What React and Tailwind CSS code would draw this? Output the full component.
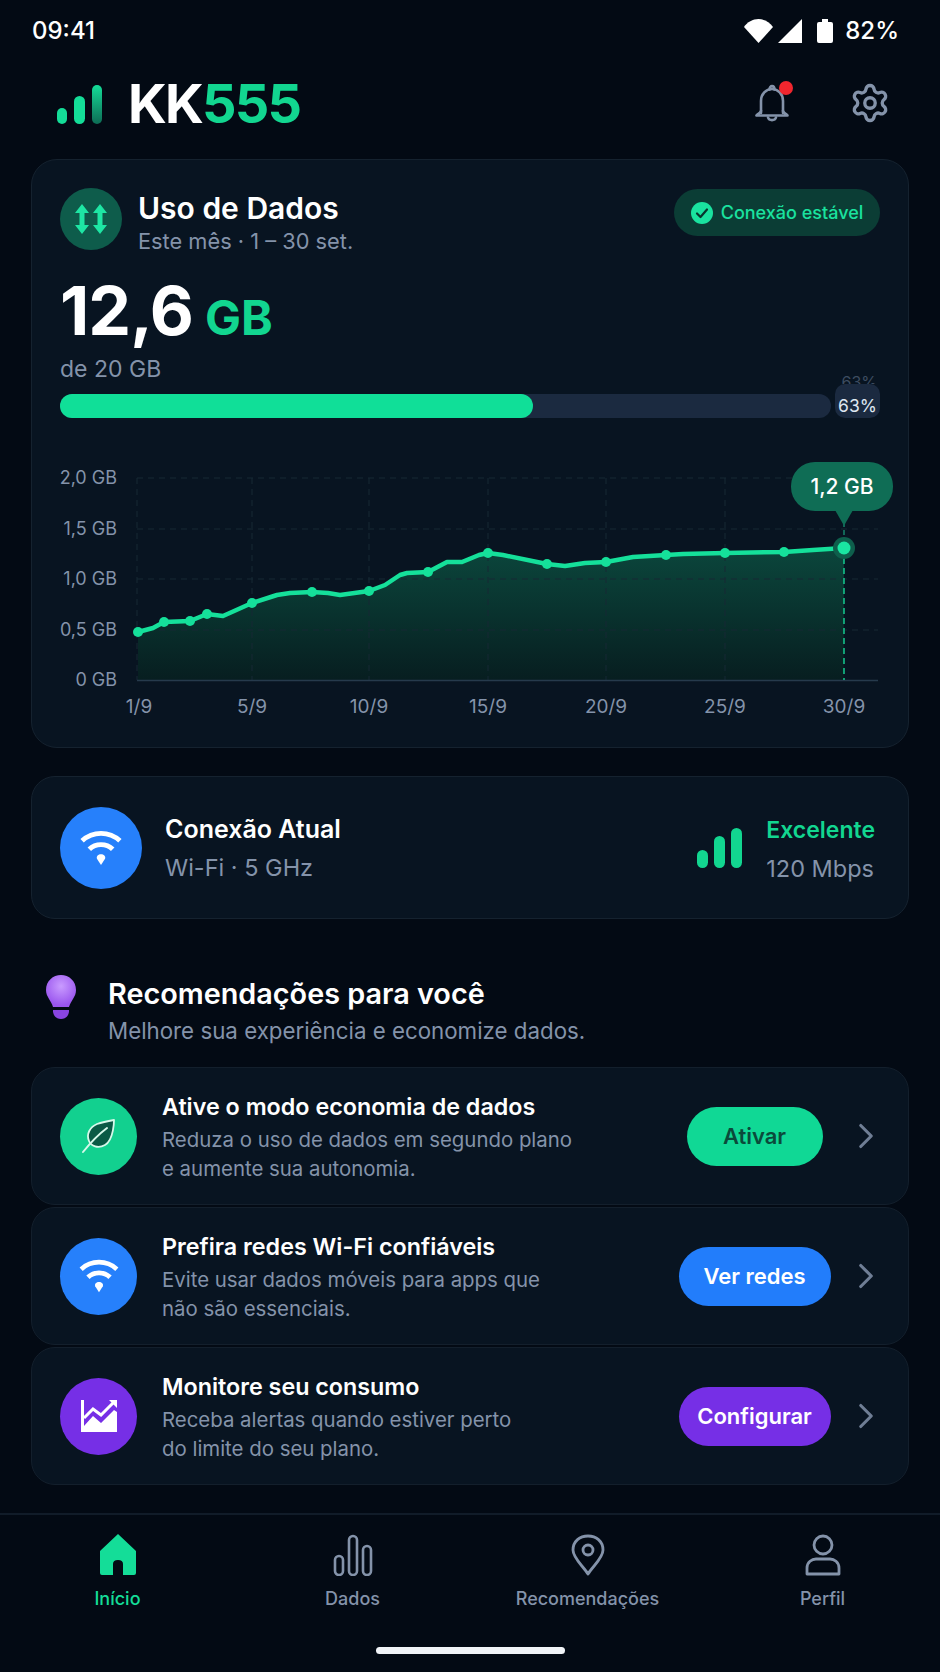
import React from 'react';
import { Settings, ChevronRight } from 'lucide-react';

const curve = [
  [138, 632], [153, 628], [164, 622], [190, 621], [207, 614], [223, 616], [252, 603], [277, 595],
  [290, 593], [312, 592], [328, 593], [340, 595], [369, 591], [385, 585], [400, 575], [407, 573],
  [428, 572], [447, 562], [462, 562], [479, 555], [488, 553], [503, 555], [547, 564], [565, 566],
  [585, 563], [606, 562], [633, 557], [666, 555], [683, 554], [725, 553], [784, 552], [813, 550], [844, 548],
];
const dots = [[138, 632], [164, 622], [190, 621], [207, 614], [252, 603], [312, 592], [369, 591], [428, 572], [488, 553], [547, 564], [606, 562], [666, 555], [725, 553], [784, 552]];
const gridY = [478, 529, 579, 630];
const gridX = [137, 252, 369, 488, 606, 725];
const yLabels = [['2,0 GB', 484], ['1,5 GB', 535], ['1,0 GB', 585], ['0,5 GB', 636], ['0 GB', 686]];
const xLabels = [['1/9', 139], ['5/9', 252], ['10/9', 369], ['15/9', 488], ['20/9', 606], ['25/9', 725], ['30/9', 844]];

const linePath = curve.map(([x, y], i) => `${i ? 'L' : 'M'}${x} ${y}`).join(' ');

const WifiGlyph = ({ className }) => (
  <svg viewBox="0 0 48 40" className={className} fill="none" stroke="white" strokeLinecap="butt">
    <path d="M3 12C15 1 33 1 45 12" strokeWidth="5.500" />
    <path d="M11 21.500C18 14.500 30 14.500 37 21.500" strokeWidth="5.500" />
    <path d="M24 39L19.500 32C18.500 29 21 27 24 27C27 27 29.500 29 28.500 32Z" fill="white" stroke="none" />
  </svg>
);

const LeafGlyph = () => (
  <svg viewBox="0 0 36 36" className="h-[36px] w-[36px]" fill="#0a5a45" stroke="#d7f8ea" strokeWidth="1.800" strokeLinecap="round" strokeLinejoin="round">
    <path d="M33 2C33 2 33 22 24 27C17 31 10 28 8 23C5 16 9 9 16 6C22 4 33 2 33 2Z" />
    <path d="M2 34C10 24 18 16 26 10" fill="none" strokeWidth="2" />
  </svg>
);

const ChartGlyph = () => (
  <svg viewBox="0 0 36 32" className="h-[32px] w-[36px]" fill="white">
    <path d="M0 0H3V32H0Z" />
    <path d="M3 18L12 9L20 15L32 3" fill="none" stroke="white" strokeWidth="3" />
    <path d="M28 0H36V8Z" />
    <path d="M3 32V26L12 16L20 23L33 10L36 12V32Z" />
  </svg>
);

const DoubleArrow = () => (
  <path d="M7 0L14 9H9.500V21H14L7 30L0 21H4.500V9H0Z" strokeLinejoin="round" />
);

const recommendations = [
  { title: 'Ative o modo economia de dados', lines: ['Reduza o uso de dados em segundo plano', 'e aumente sua autonomia.'], icon: <LeafGlyph />, circle: 'bg-[#12d08f]', action: 'Ativar', button: 'w-[136px] bg-[#10d895] text-[#0b4a3b]' },
  { title: 'Prefira redes Wi-Fi confiáveis', lines: ['Evite usar dados móveis para apps que', 'não são essenciais.'], icon: <WifiGlyph className="h-[34px] w-[42px]" />, circle: 'bg-[#2680fb]', action: 'Ver redes', button: 'w-[152px] bg-[#227dfb] text-white' },
  { title: 'Monitore seu consumo', lines: ['Receba alertas quando estiver perto', 'do limite do seu plano.'], icon: <ChartGlyph />, circle: 'bg-[#762fe6]', action: 'Configurar', button: 'w-[152px] bg-[#762fe6] text-white' },
];

const navItems = [
  {
    label: 'Início', active: true,
    icon: (
      <svg viewBox="0 0 38 42" className="h-[42px] w-[38px]" fill="#14dd98">
        <path d="M19 0L37 17V39Q37 41 35 41H24V30Q24 26 19 26Q14 26 14 30V41H3Q1 41 1 39V17Z" />
      </svg>
    ),
  },
  {
    label: 'Dados',
    icon: (
      <svg viewBox="0 0 40 42" className="h-[42px] w-[40px]" fill="none" stroke="#8493aa" strokeWidth="2.600">
        <rect x="2" y="22" width="8" height="19" rx="4" />
        <rect x="16" y="2" width="8" height="39" rx="4" />
        <rect x="30" y="12" width="8" height="29" rx="4" />
      </svg>
    ),
  },
  {
    label: 'Recomendações',
    icon: (
      <svg viewBox="0 0 34 42" className="h-[42px] w-[34px]" fill="none" stroke="#8493aa" strokeWidth="2.800" strokeLinejoin="round">
        <path d="M17 40C12 32 2 24 2 16C2 7 9 2 17 2C25 2 32 7 32 16C32 24 22 32 17 40Z" />
        <circle cx="17" cy="16" r="5" />
      </svg>
    ),
  },
  {
    label: 'Perfil',
    icon: (
      <svg viewBox="0 0 36 42" className="h-[42px] w-[36px]" fill="none" stroke="#8493aa" strokeWidth="2.800" strokeLinejoin="round">
        <circle cx="18" cy="11" r="9" />
        <path d="M2 40V34C2 28 7 25 11 25H25C29 25 34 28 34 34V40Z" />
      </svg>
    ),
  },
];

const StatusBar = () => (
  <div className="flex h-[60px] items-center justify-between pl-[32px] pr-[41px] pt-[1px] text-[24px] font-medium text-white">
    <span>09:41</span>
    <div className="flex items-center">
      <svg viewBox="0 0 29 24" className="h-[24px] w-[29px]" fill="white">
        <path d="M14.500 24L0 8C3 3 9 0 14.500 0C20 0 26 3 29 8Z" />
      </svg>
      <svg viewBox="0 0 24 24" className="ml-[5px] h-[24px] w-[24px]" fill="white">
        <path d="M24 0V24H0Z" />
      </svg>
      <svg viewBox="0 0 16 24" className="ml-[15px] h-[24px] w-[16px]" fill="white">
        <path d="M5 0H11V3H14Q16 3 16 5V22Q16 24 14 24H2Q0 24 0 22V5Q0 3 2 3H5Z" />
      </svg>
      <span className="ml-[12px]">82%</span>
    </div>
  </div>
);

const Header = () => (
  <div className="flex h-[87px] items-center justify-between pl-[57px] pr-[49px]">
    <div className="flex items-center">
      <div className="flex h-[40px] items-end gap-[7px]">
        <div className="h-[16px] w-[10px] rounded-full bg-[#14dd98]" />
        <div className="h-[28px] w-[11px] rounded-full bg-[#14dd98]" />
        <div className="h-[39px] w-[10px] rounded-full bg-gradient-to-b from-[#14dd98] to-[#0d6d55]" />
      </div>
      <div className="ml-[26px] text-[54px] font-bold leading-none tracking-[-1.800px] text-white">
        KK<span className="text-[#12d690]">555</span>
      </div>
    </div>
    <div className="mb-[1px] flex items-center gap-[60px]">
      <div className="relative h-[38px] w-[34px]">
        <svg viewBox="0 0 34 38" className="h-[38px] w-[34px]" fill="none" stroke="#8493aa" strokeWidth="2.600" strokeLinecap="round" strokeLinejoin="round">
          <path d="M14.500 5.500C14.500 1 19.500 1 19.500 5.500" />
          <path d="M6 29V17C6 10 11 5 17 5C23 5 28 10 28 17V29" />
          <path d="M6 27C5 29 3 30 1.500 31.500H32.500C31 30 29 29 28 27" />
          <path d="M13 33.500C14 37 20 37 21 33.500" />
        </svg>
        <div className="absolute right-[-4px] top-[-3px] h-[14px] w-[14px] rounded-full bg-[#f0262e]" />
      </div>
      <Settings className="h-[42px] w-[42px] text-[#8493aa]" strokeWidth={1.900} />
    </div>
  </div>
);

const UsageChart = () => (
  <svg viewBox="32 430 876 317" className="block h-[317px] w-[876px]">
    <defs>
      <linearGradient id="usageFill" x1="0" y1="0" x2="0" y2="1">
        <stop offset="0" stopColor="#0b463c" />
        <stop offset="1" stopColor="#071e20" />
      </linearGradient>
    </defs>
    <path d={`${linePath} L844 680 L138 680 Z`} fill="url(#usageFill)" />
    <g stroke="#162835" strokeWidth="1" strokeDasharray="6 5">
      {gridY.map((y) => <line key={y} x1="137" x2="878" y1={y} y2={y} />)}
      {gridX.map((x) => <line key={x} x1={x} x2={x} y1="478" y2="680" />)}
    </g>
    <line x1="137" x2="878" y1="680.500" y2="680.500" stroke="#263a4c" strokeWidth="1.500" />
    <line x1="844" x2="844" y1="548" y2="680" stroke="#14c990" strokeWidth="1.500" strokeDasharray="6 4" />
    <line x1="844" x2="844" y1="522" y2="545" stroke="#14836a" strokeWidth="1.500" strokeDasharray="5 3" />
    <path d="M835 510H853L845 524H843Z" fill="#0f6d55" />
    <path d={linePath} fill="none" stroke="#15e09a" strokeWidth="4.500" strokeLinejoin="round" strokeLinecap="round" />
    {dots.map(([x, y]) => <circle key={x} cx={x} cy={y} r="5" fill="#15e09a" />)}
    <circle cx="844" cy="548" r="11" fill="#0e5f4c" />
    <circle cx="844" cy="548" r="6.500" fill="#1ae6a2" />
    <g fill="#8493aa" fontSize="18" fontFamily="Inter, sans-serif">
      {yLabels.map(([text, y]) => <text key={text} x="117" y={y} textAnchor="end">{text}</text>)}
    </g>
    <g fill="#8493aa" fontSize="19" fontFamily="Inter, sans-serif">
      {xLabels.map(([text, x]) => <text key={text} x={x} y="713" textAnchor="middle">{text}</text>)}
    </g>
  </svg>
);

const UsageCard = () => (
  <section className="relative h-[589px] rounded-[26px] border border-[#15222f] bg-[#081421]">
    <div className="px-[28px] pt-[28px]">
      <div className="flex items-start justify-between">
        <div className="flex items-start gap-[16px]">
          <div className="flex h-[62px] w-[62px] items-center justify-center rounded-full bg-[#0e5c4b]">
            <svg viewBox="0 0 32 30" className="h-[30px] w-[32px]" fill="#1ee6a4">
              <DoubleArrow />
              <g transform="translate(18 0)">
                <DoubleArrow />
              </g>
            </svg>
          </div>
          <div className="pt-[3px]">
            <div className="text-[30px] font-semibold leading-[34px] text-white">Uso de Dados</div>
            <div className="mt-[3px] text-[21.800px] leading-[26px] text-[#8493aa]">Este mês · 1 – 30 set.</div>
          </div>
        </div>
        <div className="mt-[1px] flex h-[47px] w-[206px] items-center justify-center gap-[8px] rounded-full bg-[#0b3d35] text-[18px] font-medium text-[#1ae29f]">
          <svg viewBox="0 0 22 22" className="h-[22px] w-[22px]">
            <circle cx="11" cy="11" r="11" fill="#1ae29f" />
            <path d="M6 11.500L9.500 15L16 7.500" fill="none" stroke="#08352d" strokeWidth="2.200" strokeLinecap="round" strokeLinejoin="round" />
          </svg>
          Conexão estável
        </div>
      </div>
      <div className="mt-[18px] flex items-baseline gap-[12px] font-bold">
        <span className="text-[68px] leading-[76px] tracking-[-1px] text-white">12,6</span>
        <span className="text-[48px] leading-none text-[#12d690]">GB</span>
      </div>
      <div className="mt-[7px] text-[23px] leading-[28px] text-[#8493aa]">de 20 GB</div>
      <div className="mt-[-9px] flex items-end gap-[4px]">
        <div className="h-[24px] w-[771px] rounded-full bg-[#1b2a40]">
          <div className="h-full w-[473px] rounded-full bg-[#10df98]" />
        </div>
        <div className="w-[45px]">
          <div className="h-[10px] overflow-hidden pr-[3px] text-right text-[16px] leading-[16px] text-[#3d4c60]">63%</div>
          <div className="flex h-[34px] items-end justify-center rounded-[10px] bg-[#1b2a40] text-[17.500px] leading-[24px] text-[#dfe6f0]">63%</div>
        </div>
      </div>
    </div>
    <div className="absolute bottom-0 left-0">
      <UsageChart />
    </div>
    <div className="absolute left-[759px] top-[302px] flex h-[49px] w-[102px] items-center justify-center rounded-[24px] bg-[#0f6d55] text-[21px] font-medium text-white">
      1,2 GB
    </div>
  </section>
);

const ConnectionCard = () => (
  <section className="mt-[28px] flex h-[143px] items-center rounded-[24px] border border-[#15222f] bg-[#081421] pl-[28px] pr-[33px]">
    <div className="flex h-[82px] w-[82px] items-center justify-center rounded-full bg-[#2680fb]">
      <WifiGlyph className="h-[36px] w-[44px]" />
    </div>
    <div className="ml-[23px]">
      <div className="text-[25px] font-semibold leading-[32px] text-white">Conexão Atual</div>
      <div className="mt-[8px] text-[23.500px] leading-[30px] text-[#8493aa]">Wi-Fi · 5 GHz</div>
    </div>
    <div className="ml-auto flex h-[40px] items-end gap-[6px]">
      <div className="h-[18px] w-[11px] rounded-full bg-[#12d690]" />
      <div className="h-[32px] w-[11px] rounded-full bg-[#12d690]" />
      <div className="h-[40px] w-[11px] rounded-full bg-[#12d690]" />
    </div>
    <div className="ml-[24px] pt-[3px]">
      <div className="text-[23px] font-semibold leading-[32px] text-[#12d690]">Excelente</div>
      <div className="mt-[8px] text-[23.500px] leading-[30px] text-[#8493aa]">120 Mbps</div>
    </div>
  </section>
);

const RecommendationCard = ({ item }) => (
  <div className="flex h-[138px] items-center rounded-[24px] border border-[#131f2c] bg-[#081421] pl-[28px] pr-[21px]">
    <div className={`flex h-[77px] w-[77px] shrink-0 items-center justify-center rounded-full ${item.circle}`}>
      {item.icon}
    </div>
    <div className="ml-[25px] pt-[2px]">
      <div className="text-[23.300px] font-semibold leading-[30px] text-white">{item.title}</div>
      <div className="mt-[3px] text-[20.400px] leading-[29px] text-[#8493aa]">
        {item.lines.map((line) => <div key={line}>{line}</div>)}
      </div>
    </div>
    <div className="ml-auto flex w-[153px] shrink-0 justify-center">
      <div className={`flex h-[59px] items-center justify-center rounded-full text-[22px] font-semibold ${item.button}`}>
        {item.action}
      </div>
    </div>
    <ChevronRight className="ml-[14px] h-[42px] w-[42px] shrink-0 text-[#6f7e95]" strokeWidth={1.800} />
  </div>
);

const Recommendations = () => (
  <section>
    <div className="mt-[50px] flex items-start pl-[15px]">
      <svg viewBox="0 0 30 44" className="mt-[6px] h-[44px] w-[30px]">
        <defs>
          <radialGradient id="bulbFill" cx="0.5" cy="0.35" r="0.6">
            <stop offset="0" stopColor="#c99bff" />
            <stop offset="1" stopColor="#9a55ee" />
          </radialGradient>
        </defs>
        <path d="M15 0C23 0 30 6 30 15C30 22 25 25 23 32H7C5 25 0 22 0 15C0 6 7 0 15 0Z" fill="url(#bulbFill)" />
        <path d="M7 35H23V37C22 42 19 44 15 44C11 44 8 42 7 37Z" fill="#8a45e0" />
      </svg>
      <div className="ml-[32px] pt-[7px]">
        <div className="text-[28.800px] font-semibold leading-[36px] text-white">Recomendações para você</div>
        <div className="mt-[4px] text-[22.300px] leading-[30px] text-[#8493aa]">Melhore sua experiência e economize dados.</div>
      </div>
    </div>
    <div className="mt-[21px] flex flex-col gap-[2px]">
      {recommendations.map((item) => <RecommendationCard key={item.title} item={item} />)}
    </div>
  </section>
);

const BottomNav = () => (
  <nav className="mt-auto h-[159px] border-t-2 border-[#111c29]">
    <div className="grid grid-cols-4 pt-[19px]">
      {navItems.map((item) => (
        <div key={item.label} className="flex flex-col items-center">
          <div className="flex h-[42px] items-center">{item.icon}</div>
          <span className={`mt-[11px] text-[18px] font-medium leading-[24px] ${item.active ? 'text-[#14dd98]' : 'text-[#8493aa]'}`}>
            {item.label}
          </span>
        </div>
      ))}
    </div>
    <div className="mx-auto mt-[36px] h-[7px] w-[189px] rounded-full bg-[#f1f4f8]" />
  </nav>
);

export default function App() {
  return (
    <div className="flex h-[1672px] w-[940px] flex-col overflow-hidden bg-[#030a14] font-['Inter',sans-serif]">
      <StatusBar />
      <Header />
      <main className="mt-[12px] px-[31px]">
        <UsageCard />
        <ConnectionCard />
        <Recommendations />
      </main>
      <BottomNav />
    </div>
  );
}
